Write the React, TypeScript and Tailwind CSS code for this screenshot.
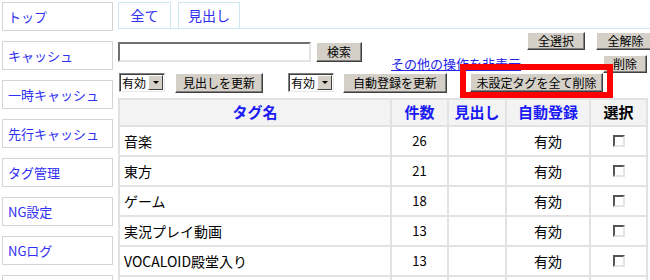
import React from 'react';

const font = { fontFamily: '"Noto Sans CJK JP", "Liberation Sans", sans-serif' };

const menu = ['トップ', 'キャッシュ', '一時キャッシュ', '先行キャッシュ', 'タグ管理', 'NG設定', 'NGログ', ''];

const rows = [
  { name: '音楽', count: '26', auto: '有効' },
  { name: '東方', count: '21', auto: '有効' },
  { name: 'ゲーム', count: '18', auto: '有効' },
  { name: '実況プレイ動画', count: '13', auto: '有効' },
  { name: 'VOCALOID殿堂入り', count: '13', auto: '有効' },
  { name: '', count: '', auto: '' },
];

const Btn = ({ children, className = '' }: { children: React.ReactNode; className?: string }) => (
  <div
    className={`flex items-center justify-center bg-[#d4d0c8] border border-t-white border-l-white border-r-[#404040] border-b-[#404040] shadow-[inset_-1px_-1px_#808080] text-[12px] leading-none text-black ${className}`}
  >
    {children}
  </div>
);

const Select = ({ className = '' }: { className?: string }) => (
  <div
    className={`flex items-stretch h-[19px] w-[46px] bg-white border border-t-[#808080] border-l-[#808080] border-r-[#e8e8e8] border-b-[#e8e8e8] shadow-[inset_1px_1px_#404040] ${className}`}
  >
    <div className="flex-1 flex items-center pl-[2px] text-[12px] leading-none">有効</div>
    <div className="w-[15px] my-[1px] mr-[1px] flex items-center justify-center bg-[#d4d0c8] border border-t-white border-l-white border-r-[#404040] border-b-[#404040]">
      <div className="w-0 h-0 border-l-[3px] border-r-[3px] border-t-[3px] border-l-transparent border-r-transparent border-t-black" />
    </div>
  </div>
);

const Check = () => (
  <div className="mx-auto w-[12px] h-[12px] bg-white border-2 border-t-[#555] border-l-[#555] border-r-[#e4e4e4] border-b-[#e4e4e4]" />
);

export default function App() {
  return (
    <div className="flex w-[650px] h-[280px] overflow-hidden bg-white text-black" style={font}>
      <div className="w-[118px] shrink-0 pl-[2px] pt-[2px] flex flex-col gap-[10px]">
        {menu.map((m, i) => (
          <div
            key={i}
            className="w-[111px] h-[29px] shrink-0 border border-[#d4d4d4] flex items-center pl-[5px] text-[13px] text-[#3030f4]"
          >
            {m}
          </div>
        ))}
      </div>

      <div className="flex-1 flex flex-col">
        <div className="flex gap-[7px] pt-[2px] border-b border-[#cfe7f5]">
          <div className="w-[53px] h-[26px] border border-b-0 border-[#cfe7f5] flex items-center justify-center text-[14px] text-[#3030f4]">
            全て
          </div>
          <div className="w-[62px] h-[26px] border border-b-0 border-[#cfe7f5] flex items-center justify-center text-[14px] text-[#3030f4]">
            見出し
          </div>
        </div>

        <div className="h-[47px] flex items-start">
          <div className="mt-[13px] w-[193px] h-[20px] bg-white border-2 border-t-[#707070] border-l-[#707070] border-r-[#e4e4e4] border-b-[#e4e4e4]" />
          <Btn className="mt-[13px] ml-[5px] w-[46px] h-[20px]">検索</Btn>
          <a className="mt-[28px] ml-[29px] text-[13px] leading-[13px] text-[#2222e8] underline whitespace-nowrap">
            その他の操作を非表示
          </a>
          <div className="ml-[6px] mt-[3px] flex flex-col items-end">
            <div className="flex gap-[11px]">
              <Btn className="w-[58px] h-[18px]">全選択</Btn>
              <Btn className="w-[59px] h-[18px]">全解除</Btn>
            </div>
            <Btn className="mt-[5px] mr-[8px] w-[44px] h-[18px]">削除</Btn>
          </div>
        </div>

        <div className="h-[20px] flex items-start">
          <Select className="ml-[1px]" />
          <Btn className="ml-[10px] w-[88px] h-[20px]">見出しを更新</Btn>
          <Select className="ml-[25px]" />
          <Btn className="ml-[9px] w-[104px] h-[20px]">自動登録を更新</Btn>
          <div className="relative ml-[23px]">
            <Btn className="w-[133px] h-[19px]">未設定タグを全て削除</Btn>
            <div className="absolute -left-[10px] -top-[9px] w-[153px] h-[34px] border-[6px] border-[#ff0000]" />
          </div>
        </div>

        <table className="mt-[5px] w-[528px] border-collapse table-fixed">
          <colgroup>
            <col className="w-[272px]" />
            <col className="w-[57px]" />
            <col className="w-[58px]" />
            <col className="w-[84px]" />
            <col className="w-[57px]" />
          </colgroup>
          <thead>
            <tr className="h-[27px] bg-[#f3f3f3] text-[15px] font-bold">
              <th className="border-2 border-[#e2e2e2] text-[#1a1af5]">タグ名</th>
              <th className="border-2 border-[#e2e2e2] text-[#1a1af5]">件数</th>
              <th className="border-2 border-[#e2e2e2] text-[#1a1af5]">見出し</th>
              <th className="border-2 border-[#e2e2e2] text-[#1a1af5]">自動登録</th>
              <th className="border-2 border-[#e2e2e2] text-black">選択</th>
            </tr>
          </thead>
          <tbody>
            {rows.map((r, i) => (
              <tr key={i} className="h-[30px] text-[14px]">
                <td className="border-2 border-[#e2e2e2] pl-[4px]">{r.name}</td>
                <td className="border-2 border-[#e2e2e2] text-center text-[13px]">{r.count}</td>
                <td className="border-2 border-[#e2e2e2]"></td>
                <td className="border-2 border-[#e2e2e2] text-center">{r.auto}</td>
                <td className="border-2 border-[#e2e2e2]">{r.name && <Check />}</td>
              </tr>
            ))}
          </tbody>
        </table>
      </div>
    </div>
  );
}
